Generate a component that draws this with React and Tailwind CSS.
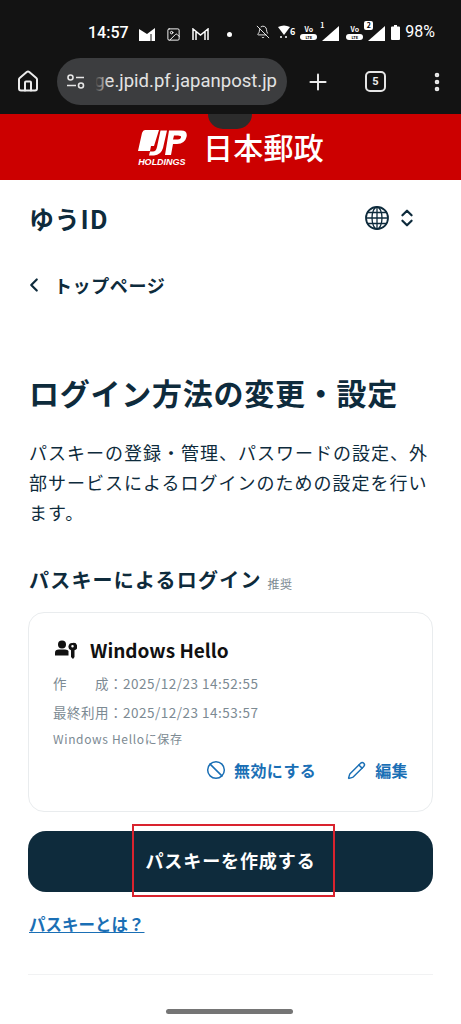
import { Ban, ChevronLeft, ChevronsUpDown, House, Pencil, Plus, EllipsisVertical, Image, BellOff } from 'lucide-react';

const font = { fontFamily: '"Noto Sans CJK JP", "Noto Sans", sans-serif' };

function Signal({ label, boxed }) {
  return (
    <span className="relative flex h-[17px] w-[19px] items-end justify-end">
      <svg width="17" height="15" viewBox="0 0 17 15"><path d="M17 0V15H0Z" fill="#fff" /></svg>
      <span className={boxed
        ? 'absolute left-[-2px] top-[-3px] flex h-[9px] w-[9px] items-center justify-center rounded-[2px] bg-white text-[7px] font-bold leading-none text-black'
        : 'absolute left-0 top-[-2px] text-[7px] font-bold leading-none text-white'}>{label}</span>
    </span>
  );
}

function Volte() {
  return (
    <span className="flex w-[17px] flex-col items-center">
      <span className="text-[7px] font-bold leading-[9px] text-white">Vo</span>
      <span className="flex h-[6px] w-[17px] items-center justify-center rounded-[3px] bg-white text-[4px] font-bold leading-none text-black">LTE</span>
    </span>
  );
}

function StatusBar() {
  return (
    <div className="flex h-[52px] items-end pb-[8px] pl-[88px] pr-[26px] text-white">
      <span className="text-[16px] font-medium leading-[22px]" style={{ fontFamily: 'Roboto, sans-serif' }}>14:57</span>
      <div className="ml-[10px] flex items-center gap-[11px] pb-[2px]">
        <svg width="16" height="13" viewBox="0 0 16 13"><path d="M0 1 8 6 16 0V13H0Z" fill="#fff" /><path d="M12 6V13" stroke="#131313" /></svg>
        <Image size={15} strokeWidth={1.5} />
        <svg width="17" height="13" viewBox="0 0 17 13" fill="none" stroke="#fff" strokeWidth="1.5"><path d="M1 12V1L8.500 7 16 1V12M4 12V4M13 12V4" /></svg>
        <span className="ml-[7px] h-[5px] w-[5px] rounded-full bg-white" />
      </div>
      <div className="ml-auto flex items-center gap-[3px] pb-[1px]">
        <BellOff size={14} strokeWidth={1.5} className="mr-[5px]" />
        <span className="relative mr-[2px] flex h-[15px] w-[17px]">
          <svg width="12" height="14" viewBox="0 0 12 14"><path d="M0 2Q6-1 12 2L6 10Z" fill="#fff" /><circle cx="3" cy="12" r="1" fill="#fff" /><circle cx="8" cy="12" r="1" fill="#fff" /></svg>
          <span className="absolute right-0 top-[2px] text-[9px] font-bold leading-none">6</span>
        </span>
        <Volte />
        <Signal label="1" />
        <span className="w-[1px]" />
        <Volte />
        <Signal label="2" boxed />
        <svg width="9" height="15" viewBox="0 0 9 15" className="ml-[3px]"><path d="M3 0H6V1.500H8Q9 1.500 9 2.500V14Q9 15 8 15H1Q0 15 0 14V2.500Q0 1.500 1 1.500H3Z" fill="#fff" /></svg>
        <span className="ml-[2px] text-[16px] leading-[22px]" style={{ fontFamily: 'Roboto, sans-serif' }}>98%</span>
      </div>
    </div>
  );
}

function Toolbar() {
  return (
    <div className="flex h-[62px] items-start pl-[16px] pr-[20px] pt-[6px] text-[#ececec]">
      <div className="flex h-[47px] w-[24px] items-center justify-center">
        <House size={25} strokeWidth={2} />
      </div>
      <div className="relative ml-[17px] flex h-[47px] w-[230px] items-center overflow-hidden rounded-full bg-[#3c3d3f] pl-[9px] pr-[10px]">
        <svg width="20" height="16" viewBox="0 0 20 16" fill="none" stroke="#e6e6e6" strokeWidth="1.600" className="shrink-0">
          <circle cx="4.500" cy="3.500" r="2.500" /><path d="M10 3.500H18M1 11.500H10" /><circle cx="15" cy="11.500" r="2.500" />
        </svg>
        <span className="ml-[10px] flex-1 overflow-hidden whitespace-nowrap text-right text-[18.500px] leading-[47px] text-[#e3e3e3]" style={{ fontFamily: 'Roboto, sans-serif', direction: 'rtl' }}>
          <bdi>ge.jpid.pf.japanpost.jp</bdi>
        </span>
        <span className="absolute left-[38px] top-0 h-full w-[14px] bg-gradient-to-r from-[#3c3d3f] to-transparent" />
      </div>
      <div className="ml-[18px] flex h-[47px] w-[26px] items-center justify-center">
        <Plus size={26} strokeWidth={1.8} />
      </div>
      <div className="ml-[32px] flex h-[47px] items-center">
        <span className="ml-[2px] flex h-[21px] w-[21px] items-center justify-center rounded-[5px] border-2 border-[#e6e6e6] text-[11px] font-bold leading-none" style={{ fontFamily: 'Roboto, sans-serif' }}>5</span>
      </div>
      <div className="ml-auto flex h-[47px] items-center">
        <EllipsisVertical size={24} strokeWidth={2.6} className="mr-[-8px]" />
      </div>
    </div>
  );
}

function JpLogo() {
  return (
    <svg width="50" height="27" viewBox="0 0 50 27" fill="#fff">
      <path d="M8 1H22L17 17H14L13 22H1L5 4Q6 1 8 1Z" />
      <path d="M23.500 1.500H30L26 19Q24 26 17 26.500H12L13 22.500H16Q19 22.500 20 18Z" />
      <path fillRule="evenodd" d="M32 1.500H44Q51 1.500 49.500 8T40 15H36L34 26H28ZM37 6.500 36 10.500H41Q43.500 10.500 44 8.500T41 6.500Z" />
    </svg>
  );
}

// globe with extra meridians, lucide's one is too sparse
function GlobeIcon() {
  return (
    <svg width="24" height="24" viewBox="0 0 24 24" fill="none" stroke="#0e2b3c" strokeWidth="1.300" className="ml-auto">
      <circle cx="12" cy="12" r="11" strokeWidth="1.800" />
      <ellipse cx="12" cy="12" rx="5" ry="11" />
      <path d="M12 1V23M1 12H23M2.500 6.500H21.500M2.500 17.500H21.500" />
    </svg>
  );
}

function Banner() {
  return (
    <div className="relative flex h-[66px] items-center justify-center bg-[#cc0000] text-white">
      <span className="absolute left-[208px] top-0 h-[15px] w-[44px] rounded-b-[18px] bg-[#2c2c2c]" />
      <div className="mt-[1px] flex items-center">
        <div className="flex w-[50px] flex-col items-center">
          <JpLogo />
          <span className="mt-[1px] whitespace-nowrap text-[9px] font-bold italic leading-[10px]" style={{ fontFamily: '"Liberation Sans", sans-serif' }}>HOLDINGS</span>
        </div>
        <span className="ml-[16px] mt-[-3px] text-[30px] font-medium leading-[40px] tracking-[0.3px]">日本郵政</span>
      </div>
    </div>
  );
}

function PasskeyCard() {
  return (
    <div className="mt-[17px] h-[200px] rounded-[16px] border border-[#e9ecee] pl-[24px] pr-[24px] pt-[23px]">
      <div className="flex h-[28px] items-center">
        <svg width="22" height="20" viewBox="0 0 22 20" fill="#111" className="ml-[2px]">
          <circle cx="7" cy="4.500" r="4" /><path d="M0 15.500V12.500Q0 9.500 4 9.500H10Q13 9.500 13.500 11V15.500Z" />
          <path d="M17.500 3A3.700 3.700 0 0 0 16 10.200V17L18 19 19.500 17V10.200A3.700 3.700 0 0 0 17.500 3ZM17.500 5A1.200 1.200 0 1 1 17.500 7.500 1.200 1.200 0 0 1 17.500 5Z" fillRule="evenodd" />
        </svg>
        <span className="ml-[13px] text-[19px] font-bold leading-[28px] text-[#111]">Windows Hello</span>
      </div>
      <p className="mt-[7px] whitespace-pre text-[13.500px] leading-[24px] tracking-[0.5px] text-[#7c8a93]">作　　成：2025/12/23 14:52:55</p>
      <p className="mt-[5px] text-[13.500px] leading-[24px] tracking-[0.5px] text-[#7c8a93]">最終利用：2025/12/23 14:53:57</p>
      <p className="mt-[4px] text-[12px] leading-[22px] tracking-[0.65px] text-[#7c8a93]">Windows Helloに保存</p>
      <div className="mt-[8px] flex items-center justify-end text-[16px] font-bold leading-[24px] tracking-[0.4px] text-[#1a6fb5]">
        <Ban size={20} strokeWidth={1.8} />
        <span className="ml-[8px]">無効にする</span>
        <Pencil size={19} strokeWidth={1.8} className="ml-[31px]" />
        <span className="ml-[9px]">編集</span>
      </div>
    </div>
  );
}

export default function App() {
  return (
    <div className="flex h-[1024px] w-[461px] flex-col overflow-hidden bg-white" style={font}>
      <div className="bg-[#131313]">
        <StatusBar />
        <Toolbar />
      </div>
      <Banner />

      <div className="flex-1 px-[28px] text-[#0e2b3c]">
        <div className="flex h-[76px] items-center">
          <span className="ml-[1px] text-[25px] font-bold leading-[36px] tracking-[0.8px]">ゆうID</span>
          <GlobeIcon />
          <ChevronsUpDown size={22} strokeWidth={2.4} className="ml-[7px] mr-[15px]" />
        </div>
        <div className="mt-[14px] flex h-[30px] items-center">
          <ChevronLeft size={22} strokeWidth={2.4} className="ml-[-5px]" />
          <span className="ml-[9px] text-[18px] font-bold leading-[30px] tracking-[0.6px]">トップページ</span>
        </div>

        <h1 className="ml-[1px] mt-[70px] whitespace-nowrap text-[30px] font-bold leading-[44px] tracking-[0.75px]">ログイン方法の変更・設定</h1>
        <p className="ml-[1px] mt-[23px] w-[405px] text-[18px] leading-[30px] tracking-[1px]">
          パスキーの登録・管理、パスワードの設定、外部サービスによるログインのための設定を行います。
        </p>

        <div className="ml-[1px] mt-[38px] flex h-[30px] items-end">
          <h2 className="text-[20px] font-bold leading-[30px] tracking-[1.2px]">パスキーによるログイン</h2>
          <span className="ml-[6px] text-[12px] leading-[22px] tracking-[0.3px] text-[#7c8a93]">推奨</span>
        </div>

        <PasskeyCard />

        <div className="relative mt-[19px]">
          <button className="h-[61px] w-full rounded-[18px] bg-[#0e2b3c] pb-[2px] text-[18px] font-bold tracking-[0.9px] text-white">パスキーを作成する</button>
          <span className="absolute left-[104px] top-[-7px] h-[73px] w-[203px] border-2 border-[#d9232e]" />
        </div>

        <a className="ml-[1px] mt-[19px] block w-fit text-[16.500px] font-bold leading-[26px] text-[#1a6fb5] underline">パスキーとは？</a>
        <div className="mt-[37px] h-px bg-[#f1f2f3]" />
      </div>

      <div className="mb-[10px] ml-[166px] h-[5px] w-[127px] rounded-full bg-[#757575]" />
    </div>
  );
}
